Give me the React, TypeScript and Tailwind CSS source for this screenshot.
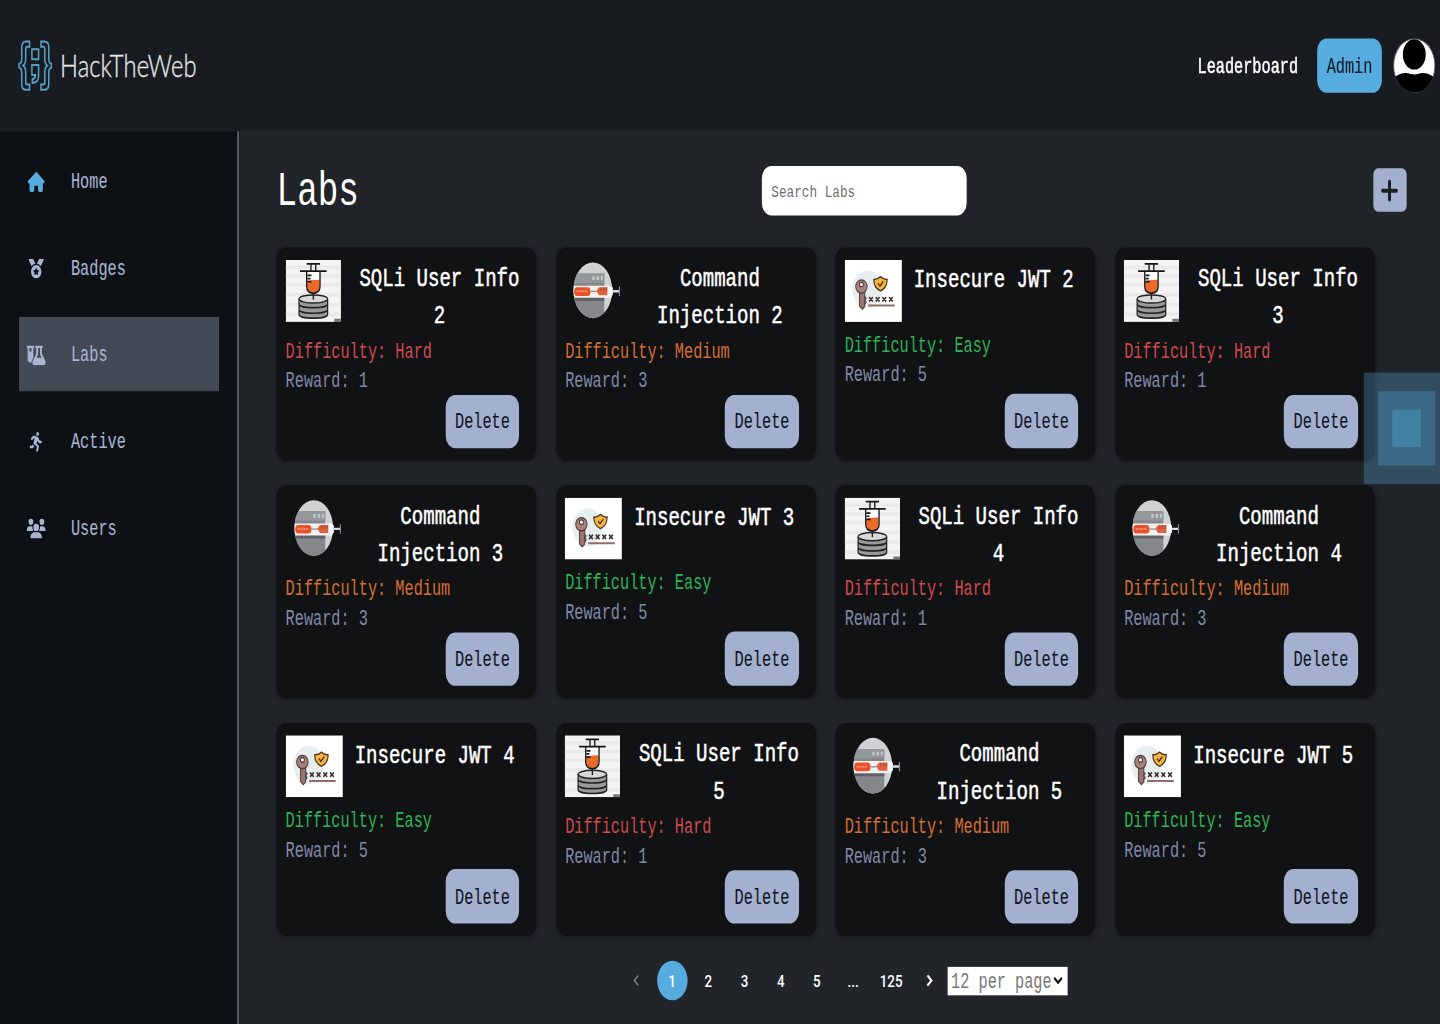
import type { ReactNode } from "react";
import { FaHouse, FaMedal, FaFlaskVial, FaPersonRunning, FaUsers } from "react-icons/fa6";

type Kind = "sqli" | "command" | "jwt";

// Monospace label with slightly taller letterforms.
function Mono({ children, className = "" }: { children: ReactNode; className?: string }) {
  return <span className={`inline-block [transform:translateY(1.7px)_scaleY(1.07)] ${className}`}>{children}</span>;
}

function SqliArt() {
  return (
    <svg className="h-[50px] w-[58px] shrink-0" viewBox="0 0 58 50" preserveAspectRatio="none">
      <rect width="58" height="50" fill="#f4f4f4" />
      <path d="M0 6h58M0 13h58M0 20h58M0 28h58M0 36h58M0 44h58" stroke="#eaeaea" strokeWidth="3" />
      <path d="M51 47.500h7v2.500h-7z" fill="#777" />
      <path d="M22 9.500h14v12q0 5-7 5.500q-7-.5-7-5.500z" fill="#fff" />
      <path d="M22.500 17q6-1 13-1v6q0 4-6.500 4.500q-6.500-.5-6.500-4.500z" fill="#ec6a26" />
      <path d="M22 9.500v12q0 5 7 5.500q7-.5 7-5.500v-12M15 9h28M22 3.200h14M26.500 3v6M31.500 3v6M23 12.500h4M23 15h3M23 17.500h4" fill="none" stroke="#151515" strokeWidth="1.400" />
      <path d="M14 31.500v12.500c0 4 30 4 30 0v-12.500z" fill="#999" />
      <ellipse cx="29" cy="31.500" rx="15" ry="3.300" fill="#d8d8d8" stroke="#222" strokeWidth="1.200" />
      <path d="M14 31.500v12.500c0 4 30 4 30 0v-12.500M14 35.500c0 4 30 4 30 0M14 40c0 4 30 4 30 0" fill="none" stroke="#222" strokeWidth="1.300" />
      <path d="M29 27v5" stroke="#222" strokeWidth="1.500" />
    </svg>
  );
}

function CommandArt() {
  return (
    <svg className="h-[50px] w-[58px] shrink-0" viewBox="0 0 58 50" preserveAspectRatio="none">
      <defs>
        <clipPath id="disc">
          <ellipse cx="29.500" cy="24.500" rx="20.300" ry="22.500" />
        </clipPath>
      </defs>
      <g clipPath="url(#disc)">
        <path d="M0 0h58v50H0z" fill="#cfd1d2" />
        <path d="M8 11h33.500v39H8z" fill="#85878a" />
        <path d="M8 11h33.500v7.500H8z" fill="#94989b" />
        <path d="M8 30h33.500v3H8z" fill="#5f6164" />
        <path d="M8 20.800h42v9.700H8z" fill="#f3f1ef" />
      </g>
      <path d="M29 13.200h2.300v3H29zM33.500 13.200h2.300v3h-2.300zM38 13.200h1.800v3H38z" fill="#c9cccd" />
      <rect x="10" y="22" width="17" height="7" rx="3" fill="#e9532b" />
      <path d="M12.500 25.300h11" stroke="#f7a186" strokeWidth="1.200" strokeDasharray="2 1" />
      <path d="M27 25.400h6" stroke="#888" strokeWidth="1" />
      <path d="M33 25l3-3h9v6.500h-9z" fill="#e3603d" />
      <path d="M38 22.300v3M41 22.300v3M44 22.300v3" stroke="#8b4b3d" strokeWidth=".8" />
      <path d="M45 22h5.500v6.500H45z" fill="#fff" />
      <path d="M50.500 25.200h7" stroke="#d7dce4" strokeWidth="2" />
      <path d="M57.400 21.500v7.500" stroke="#8d929b" strokeWidth="1.200" />
    </svg>
  );
}

function JwtArt() {
  return (
    <svg className="h-[50px] w-[60px] shrink-0" viewBox="0 0 60 50" preserveAspectRatio="none">
      <rect width="60" height="50" fill="#fff" />
      <ellipse cx="24" cy="24" rx="16" ry="15.500" fill="#e7eeef" />
      <path d="M15.500 25h5.500v12.500l-2.500 2.300-3-2.500z" fill="#9a746e" stroke="#51393a" strokeWidth="1" />
      <path d="M20.800 29.500l1.700 1.500-1.700 1.500 1.700 1.500-1.700 2" fill="none" stroke="#51393a" strokeWidth="1" />
      <ellipse cx="17.500" cy="21.500" rx="6" ry="5.400" fill="#a7827b" stroke="#51393a" strokeWidth="1" />
      <ellipse cx="17.500" cy="19.800" rx="2.100" ry="1.800" fill="#fff" stroke="#51393a" strokeWidth="1" />
      <path d="M37.500 13.500q3.500 2.500 7 2.200q.2 6.500-7 9.300q-7.200-2.800-7-9.300q3.500.3 7-2.200z" fill="#f6b63d" stroke="#4b3527" strokeWidth="1.200" />
      <path d="M34.800 18.800l2.200 2.200 3.500-3.800" fill="none" stroke="#4b3527" strokeWidth="1.300" />
      <path d="M25.500 30l4 3.500m0-3.500l-4 3.500M32.500 30l4 3.500m0-3.500l-4 3.500M39.500 30l4 3.500m0-3.500l-4 3.500M46.500 30l4 3.500m0-3.500l-4 3.500" stroke="#3d2f30" strokeWidth="1.500" />
      <path d="M24.500 36.800h28" stroke="#8f6c68" strokeWidth="1.700" />
    </svg>
  );
}

const kinds = {
  sqli: { name: "SQLi User Info", level: "Hard", reward: 1, color: "text-[#d24a50]", head: "h-[60.500px]", gap: "ml-[18.500px]", Art: SqliArt },
  command: { name: "Command Injection", level: "Medium", reward: 3, color: "text-[#d66f34]", head: "h-[60.500px]", gap: "ml-[19.500px]", Art: CommandArt },
  jwt: { name: "Insecure JWT", level: "Easy", reward: 5, color: "text-[#2fb457]", head: "h-[55.500px]", gap: "ml-[11.500px]", Art: JwtArt },
};

const labs: { kind: Kind; n: number }[] = [
  { kind: "sqli", n: 2 },
  { kind: "command", n: 2 },
  { kind: "jwt", n: 2 },
  { kind: "sqli", n: 3 },
  { kind: "command", n: 3 },
  { kind: "jwt", n: 3 },
  { kind: "sqli", n: 4 },
  { kind: "command", n: 4 },
  { kind: "jwt", n: 4 },
  { kind: "sqli", n: 5 },
  { kind: "command", n: 5 },
  { kind: "jwt", n: 5 },
];

function LabCard({ kind, n }: { kind: Kind; n: number }) {
  const { name, level, reward, color, head, gap, Art } = kinds[kind];
  return (
    <article className="flex h-[172px] flex-col rounded-[10px] bg-[#111214] px-[9.500px] py-[10px] shadow-[0_1px_5px_rgba(0,0,0,0.3)]">
      <div className={`flex items-start ${head}`}>
        <Art />
        <h2 className={`w-[170px] pt-[0.500px] text-center text-[20px] leading-[28px] text-white [-webkit-text-stroke:0.4px_white] ${gap}`}>
          <Mono>
            {name} {n}
          </Mono>
        </h2>
      </div>
      <p className={`h-6 text-[16px] leading-6 ${color}`}>
        <Mono>Difficulty: {level}</Mono>
      </p>
      <p className="h-6 text-[16px] leading-6 text-[#8089aa]">
        <Mono>Reward: {reward}</Mono>
      </p>
      <button className="mt-auto mr-[8.500px] h-11 self-end rounded-[10px] bg-[#a3b0d0] px-[10px] text-[16px] text-[#10131c] [-webkit-text-stroke:0.1px_#10131c]">
        <Mono>Delete</Mono>
      </button>
    </article>
  );
}

const nav = [
  { label: "Home", icon: <FaHouse className="h-4 w-[18px] text-[#56abdf]" /> },
  { label: "Badges", icon: <FaMedal className="size-4" /> },
  { label: "Labs", icon: <FaFlaskVial className="h-4 w-5" />, active: true },
  { label: "Active", icon: <FaPersonRunning className="h-4 w-[14px]" /> },
  { label: "Users", icon: <FaUsers className="h-4 w-5" /> },
];

function Header() {
  return (
    <header className="flex h-[106px] shrink-0 items-center bg-[#181b1f] pl-[19px] pr-[5px]">
      <svg className="h-[42px] w-9" viewBox="0 0 36 42" fill="none" stroke="#559fca" strokeWidth="1.600">
        <path d="M12 1.500v4.200H9.500Q8 5.700 8 8v7.500q0 4-2.700 5.500Q8 22.500 8 26.500V34q0 2.300 1.500 2.300H12v4.200H8.500Q3.800 40.500 3.800 36v-9q0-4-2.800-4.500v-3Q3.800 19 3.800 15V6q0-4.500 4.700-4.500z" />
        <path d="M24 1.500v4.200h2.500Q28 5.700 28 8v7.500q0 4 2.700 5.500Q28 22.500 28 26.500V34q0 2.300-1.500 2.300H24v4.200h3.500q4.700 0 4.700-4.500v-9q0-4 2.800-4.500v-3q-2.800-.5-2.800-4.500V6q0-4.500-4.700-4.500z" />
        <path d="M14.500 7.800h7v8h-7zM14.500 20.500h7v9q0 5-6.500 5.500v-3q3.300-.5 3.300-3.500h-3.800z" />
      </svg>
      <span className="ml-[8px] font-['Lato'] text-[25px] font-light tracking-[0.1px] text-[#e2e4e7] [-webkit-text-stroke:0.3px_#e2e4e7]">
        HackTheWeb
      </span>
      <Mono className="ml-auto text-[16px] text-white [-webkit-text-stroke:0.4px_white]">Leaderboard</Mono>
      <button className="ml-5 h-11 rounded-[10px] bg-[#56abdf] px-[10px] text-[16px] text-[#0d1a24] [-webkit-text-stroke:0.1px_#0d1a24]">
        <Mono>Admin</Mono>
      </button>
      <svg className="ml-3 size-11" viewBox="0 0 44 44">
        <defs>
          <clipPath id="avatar">
            <circle cx="22" cy="22" r="22" />
          </clipPath>
        </defs>
        <g clipPath="url(#avatar)">
          <path d="M0 0h44v44H0z" fill="#fff" />
          <ellipse cx="22" cy="13" rx="12" ry="12.200" />
          <path d="M0 44V32.500Q5 28.500 12 28q3-.3 6 .7 4 .8 8 0 3-1 6-.7 7 .5 12 4.500V44z" />
        </g>
        <circle cx="22" cy="22" r="21.700" fill="none" stroke="#111" strokeWidth=".6" />
      </svg>
    </header>
  );
}

function Pagination() {
  const cell = "mx-[3px] flex h-8 min-w-8 items-center justify-center rounded-full";
  return (
    <div className="mt-5 flex h-8 items-center justify-center pr-[33px] font-['Roboto'] text-[14px] font-medium text-white">
      <span className={`${cell} text-[#7b7e82]`}>
        <svg className="size-[18px]" viewBox="0 0 24 24" fill="currentColor"><path d="M15.410 7.410 14 6l-6 6 6 6 1.410-1.410L10.830 12z" /></svg>
      </span>
      <span className={`${cell} bg-[#56abdf]`}>1</span>
      <span className={cell}>2</span>
      <span className={cell}>3</span>
      <span className={cell}>4</span>
      <span className={cell}>5</span>
      <span className={cell}>...</span>
      <span className={`${cell} px-[6px]`}>125</span>
      <span className={cell}>
        <svg className="size-[18px]" viewBox="0 0 24 24" fill="currentColor" stroke="currentColor" strokeWidth=".8"><path d="M10 6 8.590 7.410 13.170 12l-4.580 4.590L10 18l6-6z" /></svg>
      </span>
      <div className="flex h-[23px] w-[126px] items-center bg-white pl-1 font-['Liberation_Mono',monospace] text-[16px] font-normal text-[#777]">
        <Mono className="w-[107px] whitespace-nowrap">12 per page</Mono>
        <svg className="h-[6px] w-[10px]" viewBox="0 0 10 6" fill="none" stroke="#111" strokeWidth="2"><path d="M1 .8l4 4 4-4" /></svg>
      </div>
    </div>
  );
}

export default function App() {
  return (
    <div className="h-[1024px] w-[1440px] overflow-hidden bg-[#212429]">
      <div className="relative flex h-[828px] w-[1512px] origin-top-left flex-col overflow-hidden font-['Liberation_Mono',monospace] [transform:scale(0.95238,1.238)]">
        <Header />
        <div className="flex min-h-0 flex-1">
          <nav className="flex w-[251px] shrink-0 flex-col gap-[10px] border-r-2 border-[#535b69] bg-[#0d1014] pt-[10px] pl-5">
            {nav.map((item) => (
              <a
                key={item.label}
                className={`flex h-[60px] w-[210px] items-center pl-[7.500px] text-[16px] text-[#a9b3d2] ${item.active ? "bg-[#434955]" : ""}`}
              >
                <span className="flex w-5 justify-center pt-px">{item.icon}</span>
                <Mono className="ml-[27px] [-webkit-text-stroke:0.1px_#a9b3d2]">{item.label}</Mono>
              </a>
            ))}
          </nav>
          <main className="flex flex-1 flex-col bg-[#212429] pl-[39.400px]">
            <div className="mt-[27.500px] flex h-10 items-center pr-[35.500px]">
              <h1 className="w-[145px] text-[36px] leading-10 text-white">
                <Mono>Labs</Mono>
              </h1>
              <input
                className="ml-[364.500px] h-10 w-[215.500px] rounded-[10px] bg-white px-[10px] pt-1 text-[13.330px] placeholder:text-[#6f6f6f]"
                placeholder="Search Labs"
              />
              <button className="ml-auto flex size-[35px] items-center justify-center rounded-[5px] bg-[#a3b0d0]">
                <svg className="size-5" viewBox="0 0 20 20" stroke="#1c2026" strokeWidth="3.200" strokeLinecap="round">
                  <path d="M10 2.800v14.400M2.800 10h14.400" />
                </svg>
              </button>
            </div>
            <div className="mt-[26.800px] grid grid-cols-[repeat(4,273px)] gap-x-[20.500px] gap-y-5">
              {labs.map((lab) => (
                <LabCard key={`${lab.kind}-${lab.n}`} kind={lab.kind} n={lab.n} />
              ))}
            </div>
            <Pagination />
          </main>
        </div>
        <div className="absolute top-[301px] left-[1432px] h-[90px] w-[90px] bg-[#56abdf]/30 p-[15px]">
          <div className="size-[60px] bg-[#56abdf]/30 p-[15px]">
            <div className="size-[30px] bg-[#46a0c8]/45" />
          </div>
        </div>
      </div>
    </div>
  );
}
